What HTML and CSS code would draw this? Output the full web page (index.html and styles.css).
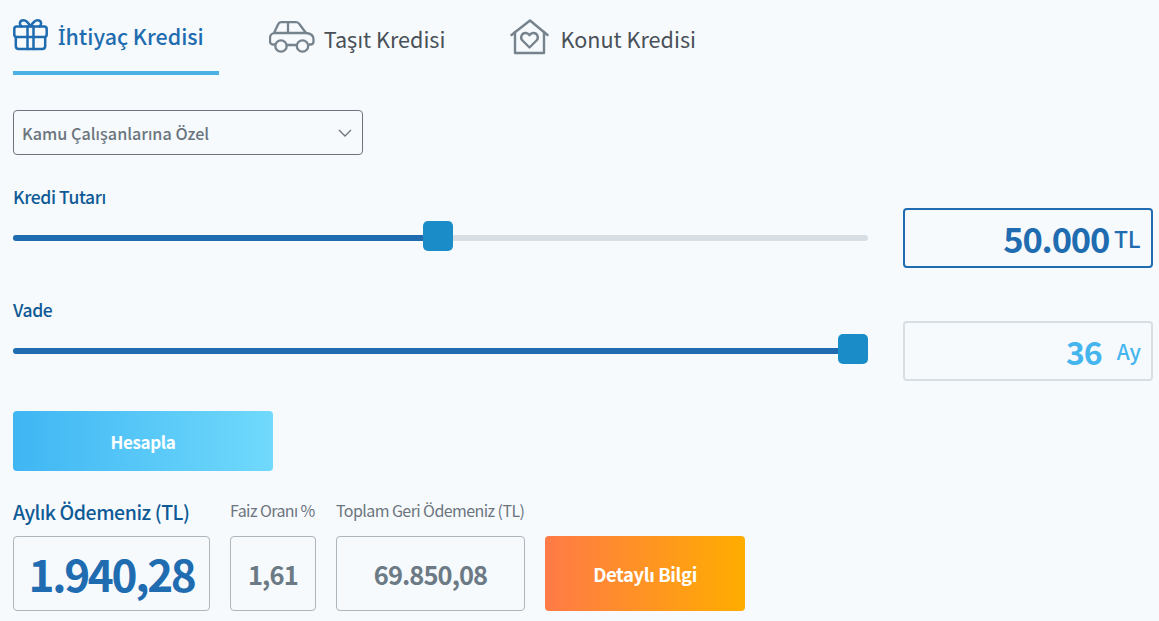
FILE: index.html
```html
<!DOCTYPE html>
<html lang="tr">
<head>
<meta charset="utf-8">
<title>Kredi Hesaplama</title>
<link rel="stylesheet" href="styles.css">
</head>
<body>
<main class="calc">
  <nav class="tabs">
    <a class="tab tab-active">
      <svg class="icon icon-gift" viewBox="0 0 35 32" fill="none" stroke="#1f6cb0" stroke-width="2.500" stroke-linejoin="round" stroke-linecap="round">
        <rect x="1.300" y="7.500" width="32.400" height="10.500" rx="2.500"/>
        <path d="M2.800 18v9c0 1.800 1.400 3 3 3h23.400c1.600 0 3-1.200 3-3v-9"/>
        <path d="M14.500 7.500V30M20.500 7.500V30"/>
        <path d="M17.500 7.500C15 3 12.500 1 10 1.300 6.500 1.600 6 5.500 8.500 7.500M17.500 7.500C20 3 22.500 1 25 1.300c3.500.3 4 4.200 1.500 6.200"/>
      </svg>
      <span class="tab-text"><span class="dotted-i">İ</span>htiyaç Kredisi</span>
    </a>
    <a class="tab tab-car">
      <svg class="icon icon-car" viewBox="0 0 46 32" fill="none" stroke="#76828c" stroke-width="2.300" stroke-linejoin="round" stroke-linecap="round">
        <path d="M6 23.500H4c-2 0-3-1.500-3-3V17c0-3 2-4.500 4-5l4-8.500C9.700 2 10.500 1.200 12 1.200h15c1.500 0 2.500.5 3.500 2l6.500 8.800c4 .5 7.500 2.500 7.500 6v2.500c0 2-1 3-3 3h-1"/>
        <circle cx="12" cy="25" r="5.700"/>
        <circle cx="33.500" cy="25" r="5.700"/>
        <path d="M17.700 24h10M5 12h32M19 1.200V12"/>
      </svg>
      <span class="tab-text">Taşıt Kredisi</span>
    </a>
    <a class="tab tab-house">
      <svg class="icon icon-house" viewBox="0 0 39 36" fill="none" stroke="#76828c" stroke-width="2.400" stroke-linejoin="round" stroke-linecap="round">
        <path d="M1.500 16 20 1.500 37.500 16"/>
        <path d="M5 13v21h29V13"/>
        <path d="M19.500 28.500l-7-7c-3-3-.5-8 3.500-7.500 1.500.2 2.800 1 3.500 2.200.7-1.200 2-2 3.500-2.200 4-.5 6.500 4.500 3.500 7.500z"/>
      </svg>
      <span class="tab-text">Konut Kredisi</span>
    </a>
  </nav>

  <div class="select">
    <span>Kamu Çalışanlarına Özel</span>
    <svg class="chevron" viewBox="0 0 14 8" fill="none" stroke="#6c757d" stroke-width="1.300"><path d="M1 1l6 6 6-6"/></svg>
  </div>

  <section class="slider-row">
    <div class="slider-col">
      <label class="field-label">Kredi Tutarı</label>
      <div class="track"><div class="fill fill-half"></div><div class="thumb"></div></div>
    </div>
    <div class="value-box value-active"><span class="amount">50.000</span><span class="unit">TL</span></div>
  </section>

  <section class="slider-row">
    <div class="slider-col">
      <label class="field-label">Vade</label>
      <div class="track"><div class="fill fill-full"></div><div class="thumb"></div></div>
    </div>
    <div class="value-box value-muted"><span class="amount-light">36</span><span class="unit-light">Ay</span></div>
  </section>

  <button class="btn btn-blue">Hesapla</button>

  <section class="results">
    <div class="result result-pay">
      <div class="result-label label-strong">Aylık Ödemeniz (TL)</div>
      <div class="result-box box-big">1.940,28</div>
    </div>
    <div class="result result-rate">
      <div class="result-label">Faiz Oranı %</div>
      <div class="result-box">1,61</div>
    </div>
    <div class="result result-total">
      <div class="result-label">Toplam Geri Ödemeniz (TL)</div>
      <div class="result-box box-total">69.850,08</div>
    </div>
    <button class="btn btn-orange">Detaylı Bilgi</button>
  </section>
</main>
</body>
</html>
```
FILE: styles.css
```css
* { box-sizing: border-box; }
html, body { margin: 0; height: 100%; }
body {
  background: #f6fafd;
  font-family: "Noto Sans CJK SC", "Noto Sans", sans-serif;
  overflow: hidden;
}
.calc { padding: 0 6px 0 13px; display: flex; flex-direction: column; }

.tabs { display: flex; gap: 50px; height: 75px; }
.tab {
  display: flex; align-items: center; gap: 10px;
  height: 75px; padding: 3px 15px 0 0;
  font-size: 21.600px; line-height: 28px; color: #495057;
  border-bottom: 4px solid transparent;
}
.tab-car { gap: 9px; }
.tab-house { gap: 11px; }
.tab-text { margin-top: 4px; white-space: nowrap; }
.dotted-i { font-family: "Noto Sans", sans-serif; font-weight: 500; }
.tab-active {
  color: #1f6cb0; font-size: 21.400px; font-weight: 500; border-bottom-color: #4ab2e4;
  padding-top: 0; padding-bottom: 2px;
}
.icon-gift { width: 35px; height: 32px; }
.icon-car { width: 46px; height: 32px; }
.icon-house { width: 39px; height: 36px; }

.select {
  margin-top: 35px; width: 350px; height: 45px;
  display: flex; align-items: center; justify-content: space-between;
  padding: 0 10px 0 8px;
  border: 1px solid #6c757d; border-radius: 4px;
  font-size: 16.200px; font-weight: 500; color: #6c757d;
}
.chevron { width: 14px; height: 8px; }

.slider-row { display: flex; align-items: flex-end; gap: 35px; width: 1140px; margin-top: 53px; }
.slider-col { width: 855px; height: 60px; position: relative; }
.field-label {
  position: absolute; left: 0; top: -21px;
  font-size: 17.500px; line-height: 20px; font-weight: 500; color: #0f5a96;
  letter-spacing: -0.4px;
}
.track {
  position: absolute; left: 0; right: 0; top: 27px;
  height: 6px; border-radius: 3px; background: #d8dfe4;
}
.fill { height: 6px; border-radius: 3px; background: #1f6cb0; }
.fill-half { width: 425px; }
.fill-full { width: 100%; }
.thumb {
  position: absolute; top: -14px; width: 30px; height: 30px;
  border-radius: 5px; background: #1a8dc8;
}
.fill-half + .thumb { left: 410px; }
.fill-full + .thumb { right: 0; }

.value-box {
  width: 250px; height: 60px; border-radius: 4px;
  display: flex; align-items: center; justify-content: flex-end;
}
.value-active { border: 2px solid #1f6cb0; padding-right: 11px; }
.value-muted { border: 2px solid #d8dfe4; padding-right: 10px; }
.amount { font-size: 34.500px; line-height: 44px; font-weight: 700; color: #1f6cb0; letter-spacing: -1.200px; }
.unit { font-size: 23px; line-height: 30px; font-weight: 500; color: #1f6cb0; margin-left: 5px; letter-spacing: -0.5px; }
.amount-light { font-size: 32px; line-height: 40px; font-weight: 700; color: #45b5ee; letter-spacing: -1px; }
.unit-light { font-size: 21px; line-height: 30px; font-weight: 500; color: #45b5ee; margin-left: 15px; }

.btn {
  border: 0; border-radius: 4px; color: #fff;
  font-family: inherit; font-weight: 700;
}
.btn-blue {
  margin-top: 30px; width: 260px; height: 60px; font-size: 17px; letter-spacing: -0.4px;
  background: linear-gradient(90deg, #3fb6f3, #70d9fc);
}
.btn-orange {
  width: 200px; height: 75px; margin-left: 20px; font-size: 18.500px; letter-spacing: -0.4px;
  background: linear-gradient(90deg, #ff7a47, #ffad00);
}

.results { display: flex; align-items: flex-end; margin-top: 25px; }
.result + .result { margin-left: 20px; }
.result-label {
  font-size: 16px; line-height: 28px; height: 30px; color: #6c757d;
  white-space: nowrap; letter-spacing: -0.58px;
}
.label-strong { font-size: 19.500px; line-height: 30px; font-weight: 500; color: #0f5a96; padding-top: 1px; letter-spacing: -0.45px; }
.result-box {
  margin-top: 10px; height: 75px;
  border: 1px solid #adb5bd; border-radius: 4px;
  display: flex; align-items: center; justify-content: center;
  font-size: 25.500px; font-weight: 700; color: #6c7a85; letter-spacing: -0.800px;
}
.box-total { letter-spacing: -0.950px; }
.box-big { font-size: 44px; color: #1f6cb0; letter-spacing: -2.300px; padding-bottom: 2px; }
.result-pay { width: 197px; }
.result-rate { width: 86px; }
.result-total { width: 189px; }
```
